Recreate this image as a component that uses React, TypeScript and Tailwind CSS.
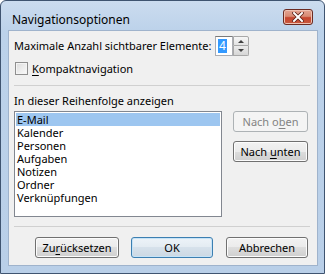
const ui = "font-['Noto_Sans',sans-serif] text-[11px] text-black whitespace-nowrap";

const btnBase =
  "h-[21px] flex items-center justify-center rounded-[3px] border text-[11px] leading-none";
const btnNormal =
  "border-[#707070] bg-[linear-gradient(#f2f2f2_0%,#ebebeb_50%,#dddddd_50%,#cfcfcf_100%)] shadow-[inset_0_0_0_1px_#fcfcfc]";

function Spinner() {
  return (
    <div className="flex h-[20px]">
      <div className="w-[18px] h-[20px] border border-[#abadb3] border-t-[#7a7a7a] bg-white flex items-center pl-[2px]">
        <span className="bg-[#3399ff] text-white text-[12px] leading-[14px] px-[1px]">4</span>
      </div>
      <div className="w-[16px] h-[20px] flex flex-col">
        <div className="h-[10px] border border-[#a8a8a8] rounded-tr-[2px] bg-[linear-gradient(#f6f6f6,#e2e2e2)] flex items-center justify-center">
          <div className="w-0 h-0 border-l-[3px] border-r-[3px] border-b-[3px] border-l-transparent border-r-transparent border-b-[#404040]" />
        </div>
        <div className="h-[10px] border border-t-0 border-[#a8a8a8] rounded-br-[2px] bg-[linear-gradient(#ececec,#d6d6d6)] flex items-center justify-center">
          <div className="w-0 h-0 border-l-[3px] border-r-[3px] border-t-[3px] border-l-transparent border-r-transparent border-t-[#404040]" />
        </div>
      </div>
    </div>
  );
}

function CloseButton() {
  return (
    <div className="w-[30px] h-[16px] mt-[8px] rounded-[3px] border border-[#6b2b22] bg-[linear-gradient(#e4a493_0%,#d88b74_45%,#c6452e_55%,#c8593f_100%)] shadow-[inset_0_0_0_1px_#eec1b2] flex items-center justify-center">
      <svg width="12" height="10" viewBox="0 0 12 10">
        <path d="M2 1 L10 9 M10 1 L2 9" stroke="#5a2018" strokeWidth="3.6" strokeLinecap="square" />
        <path d="M2 1 L10 9 M10 1 L2 9" stroke="#ffffff" strokeWidth="2" strokeLinecap="square" />
      </svg>
    </div>
  );
}

const items = ["E-Mail", "Kalender", "Personen", "Aufgaben", "Notizen", "Ordner", "Verknüpfungen"];

export default function App() {
  return (
    <div className={`w-[326px] h-[274px] bg-white ${ui}`}>
      <div className="w-[325px] h-[274px] border border-[#3f5470] rounded-t-[6px] bg-[linear-gradient(#cbdcef_0px,#bcd2ea_30px,#b9cfe8_100%)] flex flex-col pl-[7px] pr-[6px] pb-[7px]">
        <div className="h-[29px] flex items-start justify-between pl-[4px] pr-[5px]">
          <span className="text-[12px] leading-[16px] mt-[11px]">Navigationsoptionen</span>
          <CloseButton />
        </div>
        <div className="flex-1 bg-[#f0f0f0] border border-[#9fb3cc] pl-[5px] pt-[5px] pr-[7px] flex flex-col">
          <div className="h-[20px] flex items-center">
            <span className="w-[201px] leading-[14px]">Maximale Anzahl sichtbarer Elemente:</span>
            <Spinner />
          </div>
          <div className="h-[13px] mt-[6px] flex items-center pl-[1px]">
            <div className="w-[13px] h-[13px] border border-[#8f8f8f] bg-[linear-gradient(135deg,#dcdcdc,#fbfbfb)] shadow-[inset_0_0_0_1px_#f4f4f4]" />
            <span className="ml-[4px] leading-[13px]">
              <span className="underline underline-offset-2">K</span>ompaktnavigation
            </span>
          </div>
          <div className="mt-[10px] w-[296px] border-t border-[#d0d0d0]" />
          <div className="mt-[8px] h-[14px] leading-[14px]">In dieser Reihenfolge anzeigen</div>
          <div className="mt-[3px] flex">
            <div className="w-[208px] h-[106px] border border-[#828790] bg-white p-[1px]">
              {items.map((it, i) => (
                <div
                  key={it}
                  className={
                    i === 0
                      ? "h-[13px] leading-[13px] pl-[1px] bg-[#9dc6f0]"
                      : "h-[13px] leading-[13px] pl-[1px]"
                  }
                >
                  {it}
                </div>
              ))}
            </div>
            <div className="ml-[11px] flex flex-col gap-[9px]">
              <div className={`${btnBase} w-[75px] border-[#adb2b5] bg-[#f4f4f4] text-[#838383]`}>
                <span>
                  Nach o<span className="underline underline-offset-2">b</span>en
                </span>
              </div>
              <div className={`${btnBase} ${btnNormal} w-[75px]`}>
                <span>
                  Nach <span className="underline underline-offset-2">u</span>nten
                </span>
              </div>
            </div>
          </div>
          <div className="mt-[9px] w-[296px] border-t border-[#d0d0d0]" />
          <div className="mt-[10px] flex gap-[12px] pl-[21px]">
            <div className={`${btnBase} ${btnNormal} w-[84px]`}>
              <span>
                Zu<span className="underline underline-offset-2">r</span>ücksetzen
              </span>
            </div>
            <div className={`${btnBase} w-[82px] border-[#3c7fb1] bg-[linear-gradient(#edf3f8_0%,#e3ebf2_50%,#d6e1eb_50%,#ccd8e3_100%)] shadow-[inset_0_0_0_1px_#c6e3f7]`}>
              OK
            </div>
            <div className={`${btnBase} ${btnNormal} w-[82px] ml-[1px]`}>Abbrechen</div>
          </div>
        </div>
      </div>
    </div>
  );
}
